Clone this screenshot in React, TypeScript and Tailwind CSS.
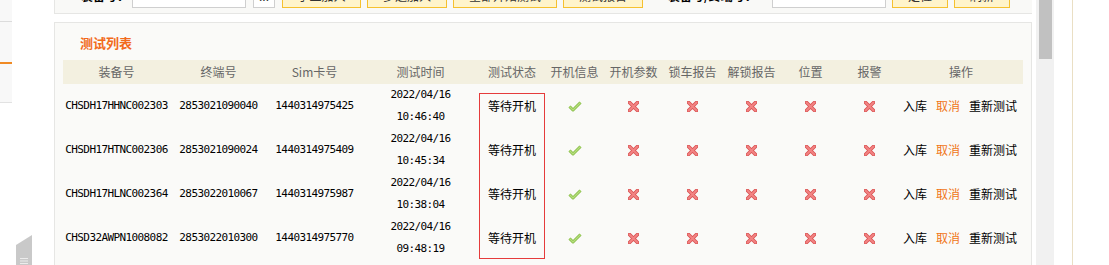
import React from 'react';

type Row = {
    equip: string;
    terminal: string;
    sim: string;
    date: string;
    time: string;
};

const rows: Row[] = [
    { equip: 'CHSDH17HHNC002303', terminal: '2853021090040', sim: '1440314975425', date: '2022/04/16', time: '10:46:40' },
    { equip: 'CHSDH17HTNC002306', terminal: '2853021090024', sim: '1440314975409', date: '2022/04/16', time: '10:45:34' },
    { equip: 'CHSDH17HLNC002364', terminal: '2853022010067', sim: '1440314975987', date: '2022/04/16', time: '10:38:04' },
    { equip: 'CHSD32AWPN1008082', terminal: '2853022010300', sim: '1440314975770', date: '2022/04/16', time: '09:48:19' },
];

const headers = ['装备号', '终端号', 'Sim卡号', '测试时间', '测试状态', '开机信息', '开机参数', '锁车报告', '解锁报告', '位置', '报警', '操作'];

const cols = 'grid-cols-[107px_97px_95px_117px_66px_59px_59px_59px_59px_59px_59px_124px]';
const statusRows = ['row-start-1', 'row-start-2', 'row-start-3', 'row-start-4'];

const cjk = "font-['Noto_Sans_CJK_SC','Noto_Sans',sans-serif]";
const mono = "font-['DejaVu_Sans_Mono',monospace] text-[11px] tracking-[-0.6px]";

function CheckIcon() {
    return (
        <svg width="14" height="11" viewBox="0 0 14 11">
            <path d="M1.5 5.5 L5 9 L12.5 1.5" fill="none" stroke="#86bb45" strokeWidth="3" strokeLinejoin="round" />
            <path d="M1.5 5.5 L5 9 L12.5 1.5" fill="none" stroke="#b4de7c" strokeWidth="1.4" strokeLinejoin="round" />
        </svg>
    );
}

function CrossIcon() {
    return (
        <svg width="11" height="11" viewBox="0 0 11 11">
            <path d="M1.5 1.5 L9.5 9.5 M9.5 1.5 L1.5 9.5" stroke="#d85050" strokeWidth="3.6" strokeLinecap="round" />
            <path d="M1.5 1.5 L9.5 9.5 M9.5 1.5 L1.5 9.5" stroke="#f28383" strokeWidth="2" strokeLinecap="round" />
        </svg>
    );
}

function YellowButton({ label, width }: { label: string; width: string }) {
    return (
        <div className={`${width} flex h-[24px] shrink-0 items-center justify-center border border-[#f6c12f] bg-[#fff4cb] text-[12px] text-[#333]`}>
            {label}
        </div>
    );
}

function TopBar() {
    return (
        <div className="h-[14px] overflow-hidden border-b border-l border-[#e6e6e4] bg-[#f9f9f7]">
            <div className="-mt-[16px] flex h-[24px] items-center text-[12px]">
                <span className="ml-[26px] w-[51px] shrink-0 font-bold text-black">装备号：</span>
                <div className="h-[24px] w-[114px] shrink-0 border border-[#cfcfcf] bg-white" />
                <div className="ml-[7px] flex h-[24px] w-[22px] shrink-0 items-center justify-center border border-[#cfcfcf] bg-white text-[#333]">...</div>
                <div className="ml-[7px] flex gap-[6px]">
                    <YellowButton label="手工加入" width="w-[79px]" />
                    <YellowButton label="多选加入" width="w-[80px]" />
                    <YellowButton label="全部开始测试" width="w-[104px]" />
                    <YellowButton label="测试报告" width="w-[80px]" />
                </div>
                <span className="ml-[25px] w-[104px] shrink-0 font-bold text-black">装备号/终端号：</span>
                <div className="h-[24px] w-[114px] shrink-0 border border-[#cfcfcf] bg-white" />
                <div className="ml-[6px] flex gap-[6px]">
                    <YellowButton label="定位" width="w-[56px]" />
                    <YellowButton label="刷新" width="w-[56px]" />
                </div>
            </div>
        </div>
    );
}

function TestList() {
    return (
        <div className="mt-[8px] flex-1 border-x border-t border-[#e6e6e4] bg-[#fafaf8] px-[8px]">
            <div className="flex h-[37px] items-center pl-[17px] pt-[2px] text-[13px] font-bold text-[#f26a1b]">测试列表</div>

            <div className={`grid ${cols} h-[24px] items-center bg-[#f3f0e0] text-[12px] text-[#666]`}>
                {headers.map((h) => (
                    <div key={h} className="text-center">
                        {h}
                    </div>
                ))}
            </div>

            <div className={`grid ${cols} grid-rows-[44px_44px_44px_44px] text-black`}>
                {rows.map((r, i) => (
                    <React.Fragment key={r.equip}>
                        <div className={`flex items-center justify-center ${mono}`}>{r.equip}</div>
                        <div className={`flex items-center justify-center ${mono}`}>{r.terminal}</div>
                        <div className={`flex items-center justify-center ${mono}`}>{r.sim}</div>
                        <div className={`flex flex-col items-center justify-center leading-[22px] ${mono}`}>
                            <span>{r.date}</span>
                            <span>{r.time}</span>
                        </div>
                        <div className={`col-start-5 ${statusRows[i]} flex items-center justify-center text-[12px]`}>等待开机</div>
                        <div className="flex items-center justify-center">
                            <CheckIcon />
                        </div>
                        {[0, 1, 2, 3, 4].map((k) => (
                            <div key={k} className="flex items-center justify-center">
                                <CrossIcon />
                            </div>
                        ))}
                        <div className="flex items-center justify-center gap-[9px] pr-[2px] text-[12px]">
                            <span>入库</span>
                            <span className="text-[#f07516]">取消</span>
                            <span>重新测试</span>
                        </div>
                    </React.Fragment>
                ))}
                <div className="col-start-5 row-span-4 row-start-1 mb-[1px] mt-[9px] border border-[#e53b3b]" />
            </div>
        </div>
    );
}

export default function App() {
    return (
        <div className={`flex h-[265px] w-[1109px] overflow-hidden bg-white ${cjk}`}>
            {/* left menu edge */}
            <div className="flex w-[12px] shrink-0 flex-col">
                <div className="h-[22px] border-b border-[#dcdcdc] bg-[#f8f8f8]" />
                <div className="h-[40px] bg-[#f8f8f8]" />
                <div className="h-[2px] bg-[#f08a24]" />
                <div className="h-[39px] border-b border-[#e2e2e2] bg-[#f8f8f8]" />
            </div>

            <div className="flex w-[42px] shrink-0 flex-col justify-end pl-[4px]">
                <svg width="16" height="30" viewBox="0 0 16 30">
                    <polygon points="0,10 16,0 16,30 0,30" fill="#c9c9c9" />
                    <path d="M4 23.5 H12 M4 26 H12 M4 28.5 H12" stroke="#ececec" strokeWidth="1" />
                </svg>
            </div>

            <div className="flex w-[978px] shrink-0 flex-col">
                <TopBar />
                <TestList />
            </div>

            <div className="w-[4px] shrink-0" />
            <div className="w-[18px] shrink-0 bg-[#f1f1f1] pl-[3px]">
                <div className="h-[59px] w-[13px] bg-[#c1c1c1]" />
            </div>
            <div className="w-[18px] shrink-0" />
            <div className="w-px shrink-0 bg-[#eadfc4]" />
        </div>
    );
}
